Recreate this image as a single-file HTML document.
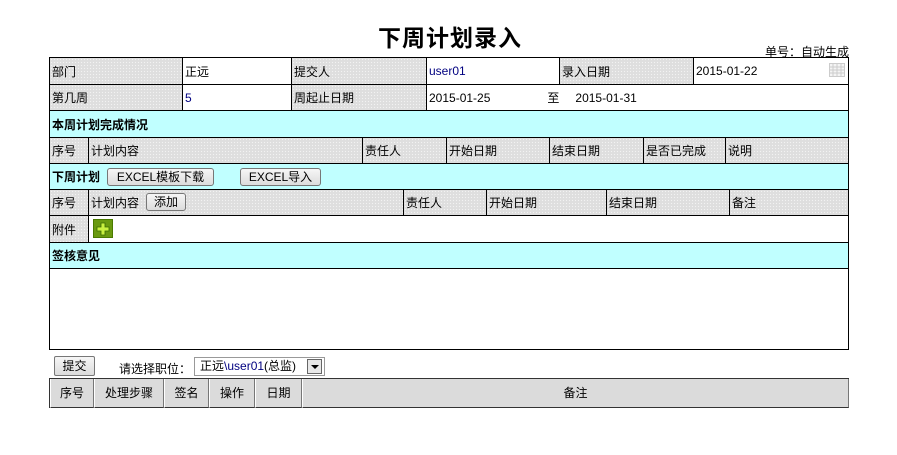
<!DOCTYPE html>
<html><head><meta charset="utf-8"><style>
body{margin:0;width:897px;height:455px;background:#fff;position:relative;overflow:hidden;font-family:"Liberation Sans","Noto Sans CJK SC",sans-serif;font-size:12px;color:#000}
.c{position:absolute;box-sizing:border-box;border-left:1px solid #000;border-top:1px solid #000;padding-left:2px;white-space:nowrap;display:flex;align-items:center}
.g{background-color:#dedede;background-image:radial-gradient(#f2f2f2 0.6px,transparent 0.8px);background-size:3px 3px}
.w{background:#fff}
.y{background:#c0ffff;font-weight:bold}
.b{color:#000080}
.btn{position:absolute;box-sizing:border-box;border:1px solid #777;border-radius:3px;background:linear-gradient(#f6f6f6,#dcdcdc);font-size:12px;text-align:center;line-height:16px;height:18px}
.h{position:absolute;box-sizing:border-box;background-color:#d4d4d4;background-image:radial-gradient(#eee 0.6px,transparent 0.8px);background-size:2px 2px;border-left:1px solid #fff;border-right:1px solid #777;border-bottom:1px solid #333;text-align:center;line-height:28px;height:29px;top:379px}
</style></head><body>
<div style="position:absolute;left:378px;top:19px;font-size:23px;font-weight:bold;letter-spacing:1px">下周计划录入</div>
<div style="position:absolute;left:765px;top:43px;font-size:12px;text-decoration:underline">单号：自动生成</div>

<!-- row1 -->
<div class="c g" style="left:49px;top:57px;width:133px;height:27px">部门</div>
<div class="c w" style="left:182px;top:57px;width:109px;height:27px">正远</div>
<div class="c g" style="left:291px;top:57px;width:135px;height:27px">提交人</div>
<div class="c w b" style="left:426px;top:57px;width:133px;height:27px">user01</div>
<div class="c g" style="left:559px;top:57px;width:134px;height:27px">录入日期</div>
<div class="c w" style="left:693px;top:57px;width:156px;height:27px">2015-01-22
<svg style="position:absolute;left:135px;top:5px" width="16" height="14"><rect x="0.5" y="0.5" width="15" height="13" fill="#f4f4f4" stroke="#ccc"/><path d="M0 4H16M0 7H16M0 10H16M4 0V14M8 0V14M12 0V14" stroke="#ccc"/></svg></div>
<!-- row2 -->
<div class="c g" style="left:49px;top:84px;width:133px;height:26px">第几周</div>
<div class="c w b" style="left:182px;top:84px;width:109px;height:26px">5</div>
<div class="c g" style="left:291px;top:84px;width:135px;height:26px">周起止日期</div>
<div class="c w" style="left:426px;top:84px;width:423px;height:26px">2015-01-25<span style="margin-left:57px">至</span><span style="margin-left:16px">2015-01-31</span></div>
<!-- row3 -->
<div class="c y" style="left:49px;top:110px;width:800px;height:27px">本周计划完成情况</div>
<!-- row4 -->
<div class="c g" style="left:49px;top:137px;width:39px;height:26px">序号</div>
<div class="c g" style="left:88px;top:137px;width:274px;height:26px">计划内容</div>
<div class="c g" style="left:362px;top:137px;width:84px;height:26px">责任人</div>
<div class="c g" style="left:446px;top:137px;width:103px;height:26px">开始日期</div>
<div class="c g" style="left:549px;top:137px;width:94px;height:26px">结束日期</div>
<div class="c g" style="left:643px;top:137px;width:82px;height:26px">是否已完成</div>
<div class="c g" style="left:725px;top:137px;width:124px;height:26px">说明</div>
<!-- row5 -->
<div class="c y" style="left:49px;top:163px;width:800px;height:26px">下周计划</div>
<div class="btn" style="left:107px;top:168px;width:107px">EXCEL模板下载</div>
<div class="btn" style="left:240px;top:168px;width:81px">EXCEL导入</div>
<!-- row6 -->
<div class="c g" style="left:49px;top:189px;width:39px;height:26px">序号</div>
<div class="c g" style="left:88px;top:189px;width:315px;height:26px">计划内容</div>
<div class="btn" style="left:146px;top:193px;width:40px">添加</div>
<div class="c g" style="left:403px;top:189px;width:83px;height:26px">责任人</div>
<div class="c g" style="left:486px;top:189px;width:120px;height:26px">开始日期</div>
<div class="c g" style="left:606px;top:189px;width:123px;height:26px">结束日期</div>
<div class="c g" style="left:729px;top:189px;width:120px;height:26px">备注</div>
<!-- row7 -->
<div class="c g" style="left:49px;top:215px;width:39px;height:27px">附件</div>
<div class="c w" style="left:88px;top:215px;width:761px;height:27px"></div>
<svg style="position:absolute;left:93px;top:219px" width="20" height="19"><rect x="0.5" y="0.5" width="19" height="18" fill="#6a9a10" stroke="#4a7a00"/><path d="M8 4h4v4h4v4h-4v4h-4v-4h-4v-4h4z" fill="#c8f040" stroke="#3a6a00" stroke-width="0.8"/></svg>
<!-- row8 -->
<div class="c y" style="left:49px;top:242px;width:800px;height:26px">签核意见</div>
<div class="c w" style="left:49px;top:268px;width:800px;height:82px"></div>
<div style="position:absolute;left:49px;top:57px;width:800px;height:293px;border:1px solid #000;box-sizing:border-box"></div>

<div class="btn" style="left:54px;top:356px;width:41px;height:20px;border-radius:2px;line-height:18px">提交</div>
<div style="position:absolute;left:119px;top:360px">请选择职位：</div>
<div style="position:absolute;left:194px;top:357px;width:131px;height:19px;box-sizing:border-box;border:1px solid #999;background:#fff;padding-left:5px;line-height:17px">正远<span class="b">\user01</span>(总监)</div>
<div style="position:absolute;left:307px;top:359px;width:15px;height:15px;box-sizing:border-box;border:1px solid #666;background:#e8e8e8"><div style="position:absolute;left:3px;top:5px;border-left:4px solid transparent;border-right:4px solid transparent;border-top:4px solid #000"></div></div>

<div style="position:absolute;left:50px;top:378px;width:799px;height:1px;background:#333"></div>
<div style="position:absolute;left:49px;top:378px;width:1px;height:30px;background:#333"></div>
<div class="h" style="left:50px;width:44px">序号</div>
<div class="h" style="left:94px;width:70px">处理步骤</div>
<div class="h" style="left:164px;width:45px">签名</div>
<div class="h" style="left:209px;width:46px">操作</div>
<div class="h" style="left:255px;width:47px">日期</div>
<div class="h" style="left:302px;width:547px">备注</div>
</body></html>
